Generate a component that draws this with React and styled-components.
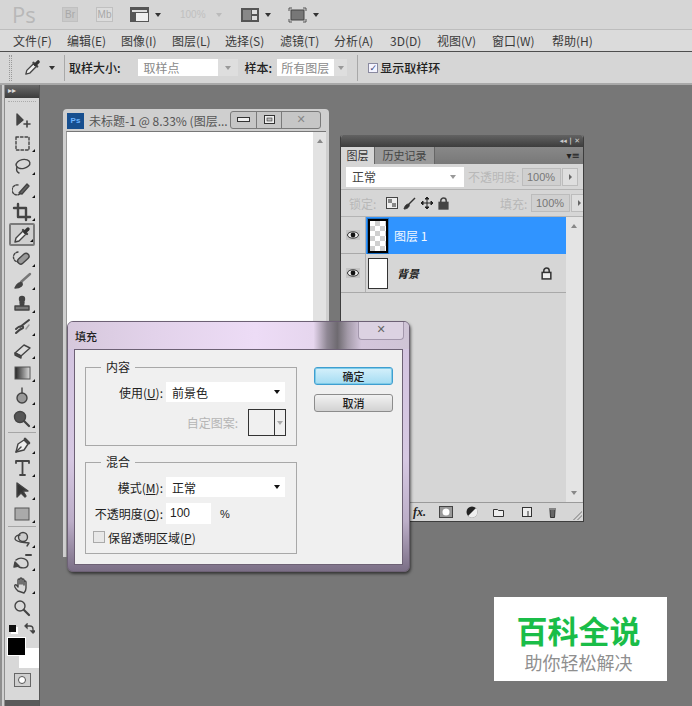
import React from "react";
import styled, { createGlobalStyle } from "styled-components";

const Global = createGlobalStyle`
  html, body { margin: 0; padding: 0; background: #777; }
  * { box-sizing: border-box; }
  body { font-family: "Noto Sans CJK SC", "Liberation Sans", sans-serif; font-size: 12px; color: #222; }
`;

const Frame = styled.div`
  width: 692px; height: 706px; overflow: hidden; display: flex; flex-direction: column; background: #777;
`;
const AppBar = styled.div`
  height: 30px; background: #d6d6d6; display: flex; align-items: center; padding-left: 12px; border-bottom: 1px solid #bdbdbd; flex: none;
`;
const PsLogo = styled.span`
  font: 22px/29px "Open Sans", "Liberation Sans", sans-serif; color: #b8b8b8; width: 50px; height: 29px; flex: none;
`;
const AppChip = styled.span`
  width: ${p => p.$w}px; height: 15px; margin-right: ${p => p.$mr}px; border: 1px solid #c0c0c0; background: ${p => p.$bg};
  color: #a8a8a8; font: 10px/13px "Liberation Sans", sans-serif; text-align: center; flex: none;
`;
const AppIconSlot = styled.span`
  display: flex; align-items: center; gap: 6px; margin-right: ${p => p.$mr}px; flex: none;
`;
const Zoomed = styled.span`
  color: #c0c0c0; font: 10px "Liberation Sans", sans-serif; width: 61px; display: flex; gap: 10px; align-items: center; flex: none;
`;
const Caret = styled.i`
  width: 0; height: 0; border-left: 3px solid transparent; border-right: 3px solid transparent;
  border-top: 4px solid ${p => p.$c || "#333"}; display: inline-block; flex: none; margin-left: ${p => p.$ml || 0}px;
`;
const MenuBar = styled.div`
  height: 22px; background: #dbdbdb; display: flex; gap: 16px; padding-left: 13px; align-items: center;
  border-bottom: 1px solid #4e4e4e; color: #3a3a3a; flex: none;
`;
const MenuItem = styled.span`line-height: 21px; white-space: nowrap; width: ${p => p.$w}px;`;
const OptionsBar = styled.div`
  height: 33px; background: #d6d6d6; display: flex; align-items: center; border-bottom: 2px solid #a9a9a9; flex: none;
`;
const Grip = styled.span`
  width: 3px; height: 26px; margin-left: 9px; margin-right: 11px; border-left: 1px dotted #999; border-right: 1px dotted #999; flex: none;
`;
const OptDivider = styled.span`width: 1px; height: 26px; background: #a8a8a8; flex: none; margin: 0 ${p => p.$r}px 0 ${p => p.$l}px;`;
const OptLabel = styled.span`font-weight: 500; color: #222; flex: none; margin-right: ${p => p.$mr}px; white-space: nowrap;`;
const OptSelect = styled.span`
  width: ${p => p.$w}px; height: 17px; background: #fff; color: #8a8a8a; line-height: 17px; padding-left: ${p => p.$pl}px; flex: none; white-space: nowrap; overflow: hidden;
`;
const OptArrow = styled.span`
  width: ${p => p.$w}px; height: 17px; background: #dedede; display: flex; justify-content: center; align-items: center;
  margin-right: ${p => p.$mr}px; flex: none;
`;
const OptCheck = styled.span`
  width: 10px; height: 10px; margin-right: 2px; border: 1px solid #8a8aa0; background: #f4f4ff; color: #3b4a80;
  font: bold 9px/9px "DejaVu Sans", sans-serif; text-align: center; flex: none;
`;
const Work = styled.div`flex: 1; display: flex; min-height: 0;`;
const LeftEdge = styled.div`width: 5px; background: #cfcfcf; border-left: 2px solid #8e8e8e; border-right: 1px solid #8e8e8e; flex: none;`;
const Tools = styled.div`
  width: 35px; flex: none; background: #d8d8d8; border-right: 1px solid #565656; display: flex; flex-direction: column; align-items: center;
`;
const ToolsHead = styled.div`
  align-self: stretch; height: 13px; background: linear-gradient(#6a6a6a, #3c3c3c); color: #ddd; font: 8px/12px "DejaVu Sans", sans-serif; padding-left: 3px; flex: none;
`;
const ToolsGrip = styled.div`align-self: stretch; height: 7px; margin: 3px 3px 0; border-top: 1px dotted #aaa; flex: none;`;
const ToolBtn = styled.div`
  width: 26px; height: ${p => p.$h || 23}px; position: relative; display: flex; align-items: center; justify-content: center; flex: none;
  ${p => p.$on && "border: 2px solid #7a7a7a; border-radius: 2px; background: #cfcfcf;"}
  ${p => p.$more && `&:after { content: ""; position: absolute; right: 0; bottom: 2px; border-left: 3px solid transparent; border-bottom: 3px solid #111; }`}
`;
const ToolSep = styled.div`width: 28px; height: 1px; background: #a6a6a6; flex: none; margin: ${p => p.$m || "1px 0"};`;
const MiniColors = styled.div`width: 30px; height: 18px; display: flex; justify-content: space-between; align-items: center; padding: 0 2px; flex: none;`;
const MiniSwatch = styled.span`width: 7px; height: 7px; background: #111; box-shadow: 2px 2px 0 #fff; flex: none;`;
const Colors = styled.div`width: 30px; height: 30px; position: relative; flex: none;`;
const Fg = styled.span`position: absolute; left: 0; top: 0; width: 19px; height: 19px; background: #000; border: 1px solid #fff; z-index: 1;`;
const Bg = styled.span`position: absolute; right: -2px; bottom: -1px; width: 20px; height: 20px; background: #fff;`;
const MaskBtn = styled.div`margin-top: 6px; width: 17px; height: 14px; background: #cfcfcf; border: 1px solid #666; display: flex; align-items: center; justify-content: center; flex: none;`;
const MaskHole = styled.span`width: 8px; height: 8px; border-radius: 50%; background: #fff; border: 1px solid #555;`;
const ToolsFoot = styled.div`margin-top: auto; align-self: stretch; height: 6px; background: #5a5a5a; flex: none;`;
const Desktop = styled.div`flex: 1; position: relative; background: #777;`;

const DocWindow = styled.div`
  position: absolute; left: 23px; top: 24px; width: 266px; height: 448px; background: #cfcfcf; border-radius: 4px 4px 0 0; padding: 0 3px;
  display: flex; flex-direction: column;
`;
const DocTitle = styled.div`height: 22px; display: flex; align-items: center; flex: none; padding-top: 1px;`;
const PsBadge = styled.span`
  width: 17px; height: 16px; margin-left: 1px; margin-right: 5px; background: #174f8f; color: #6db4ff; font: bold 8px/16px "Liberation Sans", sans-serif; text-align: center; flex: none;
`;
const DocName = styled.span`color: #555; width: 141px; white-space: nowrap; overflow: hidden; font-size: 12px; flex: none;`;
const WinBtns = styled.div`display: flex; height: 18px; border: 1px solid #7a7a7a; border-radius: 3px; margin-top: -2px; background: #c6c6c6; flex: none;`;
const WinBtn = styled.span`
  width: ${p => p.$w}px; display: flex; align-items: center; justify-content: center; border-left: ${p => p.$first ? "0" : "1px solid #7a7a7a"};
  color: #888; font: bold 11px/16px "DejaVu Sans", sans-serif;
`;
const DocBody = styled.div`flex: 1; display: flex; border-top: 1px solid #777; border-left: 1px solid #999;`;
const Paper = styled.div`flex: 1; background: #fff;`;
const DocScroll = styled.div`width: 13px; background: #e2e2e2; display: flex; justify-content: center; padding-top: 7px;`;
const UpArrow = styled.i`
  width: 0; height: 0; border-left: 3px solid transparent; border-right: 3px solid transparent; border-bottom: 4px solid #888; display: block;
`;
const DownArrow = styled.i`
  width: 0; height: 0; border-left: 3px solid transparent; border-right: 3px solid transparent; border-top: 4px solid #888; display: block;
`;

const Panel = styled.div`
  position: absolute; left: 300px; top: 50px; width: 244px; height: 387px; background: #d6d6d6; display: flex; flex-direction: column;
  border: 1px solid #3d3d3d; border-top: 0; border-radius: 3px 3px 0 0; overflow: hidden;
`;
const PanelHead = styled.div`
  height: 12px; background: linear-gradient(#626262, #3d3d3d); color: #ccc; font: bold 7px/12px "DejaVu Sans", sans-serif; text-align: right; padding-right: 3px; flex: none;
`;
const Tabs = styled.div`height: 17px; background: linear-gradient(#888, #787878); display: flex; align-items: stretch; flex: none; position: relative;`;
const Tab = styled.span`
  width: ${p => p.$w}px; text-align: center; line-height: 17px; font-size: 11px; color: ${p => p.$on ? "#333" : "#444"}; background: ${p => p.$on ? "#d6d6d6" : "#9a9a9a"};
  border-right: 1px solid #666;
`;
const TabMenu = styled.span`position: absolute; right: 3px; top: 3px; font: 10px/12px "DejaVu Sans", sans-serif; color: #222;`;
const PanelRow = styled.div`
  height: ${p => p.$h}px; display: flex; align-items: center; flex: none; padding-left: ${p => p.$pl || 0}px; border-bottom: ${p => p.$line ? "1px solid #b4b4b4" : "0"};
`;
const BlendSelect = styled.span`width: 118px; height: 20px; background: #fff; color: #444; line-height: 20px; padding-left: 6px; flex: none;`;
const BlendArrow = styled.span`width: 4px; flex: none; display: flex; justify-content: center; margin: 0 3px 0 -13px;`;
const DimLabel = styled.span`color: #b8b8b8; flex: none; white-space: nowrap; width: ${p => p.$w}px; margin: ${p => p.$m || 0};`;
const PctBox = styled.span`
  width: 39px; height: 18px; margin-left: 4px; background: #d0d0d0; border: 1px solid #bcbcbc; color: #777; font: 11px/16px "Liberation Sans", sans-serif; padding-left: 4px; flex: none;
`;
const PctBtn = styled.span`
  width: 16px; height: 18px; margin-left: 1px; background: #dedede; border: 1px solid #bcbcbc; display: flex; align-items: center; justify-content: center; flex: none;
`;
const RightTri = styled.i`width: 0; height: 0; border-top: 3px solid transparent; border-bottom: 3px solid transparent; border-left: 3px solid #666; display: block;`;
const LockIcons = styled.span`display: flex; gap: 5px; align-items: center; margin-left: 2px; flex: none; width: 100px;`;
const LayersArea = styled.div`flex: 1; display: flex; min-height: 0; border-top: 1px solid #b4b4b4;`;
const LayerList = styled.div`flex: 1; display: flex; flex-direction: column; min-width: 0;`;
const LayerRow = styled.div`
  height: ${p => p.$h}px; display: flex; align-items: stretch; flex: none; border-bottom: ${p => p.$on ? "0" : "1px solid #a9a9a9"};
`;
const EyeCol = styled.div`
  width: 25px; flex: none; display: flex; align-items: center; justify-content: center; border-right: 1px solid #b0b0b0; border-bottom: ${p => p.$on ? "1px solid #a9a9a9" : 0};
`;
const LayerMain = styled.div`
  flex: 1; display: flex; align-items: center; background: ${p => p.$on ? "#3094ff" : "transparent"}; position: relative;
`;
const Thumb = styled.div`
  width: 20px; height: ${p => p.$on ? 34 : 31}px; margin-left: 2px; flex: none;
  background: ${p => p.$checker ? "repeating-conic-gradient(#cfcfcf 0 25%, #fff 0 50%) 0 0 / 10px 10px" : "#fff"};
  border: ${p => p.$on ? "2px solid #000" : "1px solid #333"}; ${p => p.$on && "box-shadow: 0 0 0 1px #1c6fc2;"}
`;
const LayerName = styled.span`
  margin-left: ${p => p.$ml}px; color: ${p => p.$on ? "#f2f8ff" : "#222"}; font-style: ${p => p.$on ? "normal" : "italic"}; font-weight: ${p => p.$on ? 400 : 700}; white-space: nowrap; font-size: ${p => p.$on ? 12 : 11}px;
`;
const LockSlot = styled.span`margin-left: auto; margin-right: 14px; display: flex;`;
const PanelScroll = styled.div`width: 16px; background: #e4e4e4; display: flex; flex-direction: column; align-items: center; justify-content: space-between; padding: 7px 0 7px; flex: none; margin-right: 1px;`;
const PanelFoot = styled.div`
  height: 19px; border-top: 1px solid #9a9a9a; background: #d6d6d6; display: flex; align-items: center; flex: none; padding-left: 72px; position: relative;
`;
const Fx = styled.span`font: italic bold 12px/18px "Liberation Serif", serif; color: #222; width: 26px;`;
const FootIcon = styled.span`width: ${p => p.$w}px; display: flex; align-items: center; flex: none;`;
const ResizeGrip = styled.span`
  position: absolute; right: 1px; bottom: 1px; width: 11px; height: 11px;
  background: repeating-linear-gradient(135deg, #a5a5a5 0 1px, transparent 1px 3px);
  clip-path: polygon(100% 0, 100% 100%, 0 100%);
`;

const Dialog = styled.div`
  position: absolute; left: 27px; top: 236px; width: 343px; height: 251px; border-radius: 6px; padding: 0 6px 6px; overflow: hidden;
  background: linear-gradient(180deg, #d3c4e0 0, #d6c8e2 55%, #bcaec8 80%, #7b6f86 100%);
  border: 1px solid #6d6175; box-shadow: 1px 2px 3px rgba(0,0,0,.55);
  display: flex; flex-direction: column; z-index: 2;
`;
const DlgTitle = styled.div`
  height: 27px; flex: none; margin: 0 -6px; padding-left: 7px; display: flex; align-items: center; position: relative;
  font-weight: 500; font-size: 11px; color: #222;
  background: linear-gradient(90deg, #d6c8dc 0, #e2d2ea 25%, #eddcf6 55%, #e6d6ee 72%, #8f8794 76%, #6e6a70 79%, #a39aa8 82%, #d4c6dc 86%, #cfc4d6 100%);
`;
const DlgClose = styled.span`
  position: absolute; right: 5px; top: 0; width: 46px; height: 18px; border: 1px solid #a397ac; border-top: 0; border-radius: 0 0 4px 4px; background: #dcd2e2;
  color: #666; font: bold 11px/16px "DejaVu Sans", sans-serif; text-align: center;
`;
const DlgBody = styled.div`
  flex: 1; background: #f0f0f0; border: 1px solid #6d6175; padding: 9px 10px 10px 10px; display: flex; gap: 17px;
`;
const Groups = styled.div`width: 212px; display: flex; flex-direction: column; gap: 8px; flex: none;`;
const Group = styled.fieldset`
  margin: 0; padding: 0 7px; border: 1px solid #a8a8a8; height: ${p => p.$h}px; display: flex; flex-direction: column;
`;
const Legend = styled.legend`padding: 0 5px; margin-left: 8px; font-size: 12px; line-height: 16px; color: #222;`;
const Field = styled.div`
  display: flex; align-items: center; height: ${p => p.$h}px; margin-top: ${p => p.$mt || 0}px; flex: none;
`;
const FieldLabel = styled.label`
  width: ${p => p.$w}px; text-align: right; flex: none; white-space: nowrap; color: ${p => p.$dim ? "#b5b5b5" : "#222"}; font-size: 12px;
  u { text-decoration: underline; }
`;
const DlgSelect = styled.div`
  width: 119px; height: 20px; background: #fff; margin-left: 3px; display: flex; align-items: center; justify-content: space-between; padding: 0 5px 0 6px; flex: none; color: #222;
`;
const Pattern = styled.div`
  width: 38px; height: 27px; border: 1px solid #333; margin-left: 10px; display: flex; flex: none; background: #f0f0f0;
`;
const PatternSide = styled.span`margin-left: auto; width: 11px; border-left: 1px solid #333; display: flex; align-items: center; justify-content: center;`;
const NumBox = styled.div`
  width: 45px; height: 21px; margin-left: 3px; background: #fff; padding-left: 4px; font: 12px/20px "Liberation Sans", sans-serif; color: #222; flex: none;
`;
const Percent = styled.span`margin-left: 9px; font: 11px "Liberation Sans", sans-serif; color: #222;`;
const Check = styled.span`width: 12px; height: 12px; border: 1px solid #aaa; background: #e8e8e8; flex: none; margin-right: 3px;`;
const Buttons = styled.div`display: flex; flex-direction: column; gap: 9px; padding-top: 8px; flex: none;`;
const DlgBtn = styled.button`
  width: 79px; height: 18px; padding: 0; font: 500 11px/14px "Noto Sans CJK SC", sans-serif; color: #222; border-radius: 3px;
  border: 1px solid ${p => p.$primary ? "#3f9ed0" : "#8c8c8c"};
  background: ${p => p.$primary ? "linear-gradient(#d5f0fb, #a4dcf2)" : "linear-gradient(#f2f2f2, #d2d2d2)"};
  box-shadow: ${p => p.$primary ? "0 0 0 1px #7ecbe8 inset" : "none"};
`;
const Watermark = styled.div`
  position: absolute; left: 454px; top: 512px; width: 173px; height: 84px; background: #fff; display: flex; flex-direction: column; align-items: center; padding: 14px 4px 0 0;
`;
const WmTitle = styled.div`font-size: 31px; line-height: 38px; font-weight: 700; color: #1abd48; flex: none;`;
const WmSub = styled.div`font-size: 18px; line-height: 22px; color: #8f8f8f; margin-top: 2px; flex: none;`;

const I = ({ children, w = 20, h = 20, vb = "0 0 20 20" }) => (
  <svg width={w} height={h} viewBox={vb} fill="none" stroke="#444" strokeWidth="1.4" strokeLinecap="round" strokeLinejoin="round">{children}</svg>
);
const Dropper = ({ s = 20 }) => (
  <I w={s} h={s}>
    <path d="M3 17l1-4 7-7 3 3-7 7z" fill="#eee" />
    <path d="M11 5l4 4" strokeWidth="2.4" />
    <path d="M13 7l3-3" stroke="#333" strokeWidth="3.4" />
  </I>
);
const toolIcons = {
  move: <I><path d="M5 4v11l6-5z" fill="#444" /><path d="M15 11v6M12 14h6" strokeWidth="1.600" /></I>,
  marquee: <I><rect x="4" y="4" width="13" height="13" strokeDasharray="2.5 2" /></I>,
  lasso: <I><ellipse cx="11" cy="8" rx="7" ry="4.5" transform="rotate(-12 11 8)" /><path d="M5 11c-1 3 0 5 2 6" /></I>,
  quick: <I><path d="M6 6a5 5 0 1 0 2 9" strokeDasharray="2 1.5" /><path d="M7 14l8-9 2 2-7 8z" fill="#666" /></I>,
  crop: <I><path d="M6 2v13h12M2 6h12v12" strokeWidth="2.400" /></I>,
  heal: <I><path d="M6 4a5 5 0 1 0 1 10" strokeDasharray="2 1.5" /><rect x="5" y="8" width="13" height="6" rx="3" transform="rotate(-42 11 11)" fill="#999" /></I>,
  brush: <I><path d="M18 3L9 11" strokeWidth="2.4" stroke="#777" /><path d="M3 17c2-5 5-6 7-5 1 2-1 5-7 5z" fill="#444" /></I>,
  stamp: <I><path d="M8 8h4l-.5 4h-3z" fill="#444" /><circle cx="10" cy="5" r="2.5" fill="#444" /><rect x="3" y="12" width="14" height="4" fill="#777" /></I>,
  history: <I><path d="M17 3L8 10M4 12c4-4 8-4 7-1-3 1-4 2-7 5" strokeWidth="2" /><path d="M14 12l3-4" stroke="#999" /></I>,
  eraser: <I><path d="M3 13l9-8 6 3-9 8z" fill="#ddd" /><path d="M3 13l6 3v2l-6-3z" fill="#555" /></I>,
  gradient: <svg width="20" height="20" viewBox="0 0 20 20"><defs><linearGradient id="g1"><stop offset="0" stopColor="#222" /><stop offset="1" stopColor="#ddd" /></linearGradient></defs><rect x="3" y="4" width="15" height="12" fill="url(#g1)" stroke="#555" /></svg>,
  dodge: <I><circle cx="10" cy="12" r="5" fill="#999" /><path d="M10 7V2" /></I>,
  burn: <I><circle cx="8" cy="8" r="5.5" fill="#555" /><path d="M12 12l5 5" strokeWidth="2.2" /></I>,
  pen: <I><path d="M4 17l2-8 6-4 4 4-4 6z" fill="#eee" /><path d="M4 17l5-5" /><path d="M13 4l4 4" strokeWidth="2.6" /></I>,
  text: <I><path d="M4 5V3h13v2M10.500 3v14M8 17h5" strokeWidth="1.8" /></I>,
  path: <I><path d="M5 2v14l4-4 4 4 1-1-3-5h5z" fill="#333" /></I>,
  shape: <svg width="20" height="20" viewBox="0 0 20 20"><rect x="3" y="4" width="14" height="12" fill="#aaa" stroke="#555" /></svg>,
  orbit: <I><circle cx="11" cy="8" r="4.5" fill="#ccc" /><path d="M3 10c0-3 3-4 5-4M3 10c2 4 8 3 14 4l-2 3" /></I>,
  roll: <I><path d="M14 3h5" strokeWidth="2" /><path d="M4 8c5-4 12-1 12 4 0 5-8 5-11 1" /><path d="M3 10l4 4-5 1z" fill="#444" /></I>,
  hand: <I><path d="M6 16c-2-2-4-5-3-6s2 1 3 2V5c0-1.500 2-1.500 2 0v4-5c0-1.500 2-1.500 2 0v5-4c0-1.500 2-1.500 2 0v5-3c0-1.500 2-1.500 2 0v6c0 3-1 4-2 5z" /></I>,
  zoom: <I><circle cx="8" cy="8" r="5" /><path d="M12 12l5 5" strokeWidth="2.2" /></I>,
};
const toolsTop = [["move", 0], ["marquee", 1], ["lasso", 1], ["quick", 1], ["crop", 1], ["dropper", 1, 1], ["heal", 1], ["brush", 1], ["stamp", 1], ["history", 1], ["eraser", 1], ["gradient", 1], ["dodge", 1], ["burn", 1]];
const toolsMid = [["pen", 1], ["text", 1], ["path", 1], ["shape", 1]];
const toolsEnd = [["orbit", 1], ["roll", 1], ["hand", 1], ["zoom", 0]];
const renderTool = ([n, more, on]) => (
  <ToolBtn key={n} $more={more} $on={on}>{n === "dropper" ? <Dropper /> : toolIcons[n]}</ToolBtn>
);
const menus = [["文件(F)", 38], ["编辑(E)", 38], ["图像(I)", 35], ["图层(L)", 37], ["选择(S)", 39], ["滤镜(T)", 38], ["分析(A)", 40], ["3D(D)", 31], ["视图(V)", 39], ["窗口(W)", 44], ["帮助(H)", 40]];

const Eye = () => (
  <svg width="14" height="10" viewBox="0 0 14 10"><rect width="14" height="10" fill="#c4c4c4" /><ellipse cx="7" cy="5" rx="5.500" ry="3.200" fill="#eee" stroke="#333" /><circle cx="7" cy="5" r="2.400" fill="#111" /></svg>
);
const Padlock = ({ c = "#333" }) => (
  <svg width="11" height="13" viewBox="0 0 10 12" fill="none" stroke={c} strokeWidth="1.400"><path d="M2.500 5V3.500a2.500 2.500 0 0 1 5 0V5" /><rect x="1" y="5" width="8" height="6" fill={c === "#333" ? "#eee" : c} /></svg>
);

export default function App() {
  return (
    <Frame>
      <Global />
      <AppBar>
        <PsLogo>Ps</PsLogo>
        <AppChip $w={16} $mr={18} $bg="#c9c9c9">Br</AppChip>
        <AppChip $w={17} $mr={17} $bg="#dcdcdc">Mb</AppChip>
        <AppIconSlot $mr={19}>
          <svg width="19" height="15" viewBox="0 0 19 15"><rect width="19" height="15" fill="#555" /><rect x="2" y="3" width="15" height="2" fill="#ddd" /><rect x="6" y="6" width="12" height="8" fill="#eee" /></svg>
          <Caret />
        </AppIconSlot>
        <Zoomed>100%<Caret $c="#bbb" /></Zoomed>
        <AppIconSlot $mr={17}>
          <svg width="18" height="14" viewBox="0 0 18 14"><rect width="18" height="14" fill="#555" /><rect x="2" y="2" width="8" height="10" fill="#888" /><rect x="11" y="2" width="5" height="4" fill="#ddd" /><rect x="11" y="8" width="5" height="4" fill="#ddd" /></svg>
          <Caret />
        </AppIconSlot>
        <AppIconSlot $mr={0}>
          <svg width="19" height="16" viewBox="0 0 19 16"><rect x="3" y="3" width="13" height="10" fill="#777" stroke="#444" /><path d="M1 4V1h3M15 1h3v3M18 12v3h-3M4 15H1v-3" stroke="#555" fill="none" /></svg>
          <Caret />
        </AppIconSlot>
      </AppBar>
      <MenuBar>{menus.map(([m, w]) => <MenuItem key={m} $w={w}>{m}</MenuItem>)}</MenuBar>
      <OptionsBar>
        <Grip />
        <Dropper s={19} />
        <Caret $ml={7} />
        <OptDivider $l={9} $r={4} />
        <OptLabel $mr={17}>取样大小:</OptLabel>
        <OptSelect $w={80} $pl={6}>取样点</OptSelect>
        <OptArrow $w={20} $mr={7}><Caret $c="#999" /></OptArrow>
        <OptLabel $mr={5}>样本:</OptLabel>
        <OptSelect $w={57} $pl={4}>所有图层</OptSelect>
        <OptArrow $w={13} $mr={10}><Caret $c="#999" /></OptArrow>
        <OptDivider $l={0} $r={10} />
        <OptCheck>✓</OptCheck>
        <OptLabel $mr={0}>显示取样环</OptLabel>
      </OptionsBar>
      <Work>
        <LeftEdge />
        <Tools>
          <ToolsHead>▸▸</ToolsHead>
          <ToolsGrip />
          {toolsTop.map(renderTool)}
          <ToolSep $m="2px 0 0" />
          {toolsMid.map(renderTool)}
          <ToolSep $m="1px 0 0" />
          {toolsEnd.map(renderTool)}
          <MiniColors>
            <MiniSwatch />
            <svg width="11" height="11" viewBox="0 0 11 11" fill="none" stroke="#444" strokeWidth="1.300"><path d="M2 3h4c2 0 3 1 3 3v3M1 3l2-2v4zM9 10L7 8h4z" /></svg>
          </MiniColors>
          <Colors><Fg /><Bg /></Colors>
          <MaskBtn><MaskHole /></MaskBtn>
          <ToolsFoot />
        </Tools>
        <Desktop>
          <DocWindow>
            <DocTitle>
              <PsBadge>Ps</PsBadge>
              <DocName>未标题-1 @ 8.33% (图层...</DocName>
              <WinBtns>
                <WinBtn $w={25} $first><svg width="13" height="5" viewBox="0 0 13 5"><rect x=".5" y=".5" width="12" height="4" fill="#eee" stroke="#333" /></svg></WinBtn>
                <WinBtn $w={25}><svg width="11" height="9" viewBox="0 0 11 9"><rect x=".5" y=".5" width="10" height="8" fill="#eee" stroke="#333" /><rect x="3" y="3" width="5" height="3" fill="#bbb" stroke="#333" strokeWidth=".6" /></svg></WinBtn>
                <WinBtn $w={39}>✕</WinBtn>
              </WinBtns>
            </DocTitle>
            <DocBody>
              <Paper />
              <DocScroll><UpArrow /></DocScroll>
            </DocBody>
          </DocWindow>

          <Panel>
            <PanelHead>◂◂ | ✕</PanelHead>
            <Tabs>
              <Tab $w={34} $on>图层</Tab>
              <Tab $w={60}>历史记录</Tab>
              <TabMenu>▾≡</TabMenu>
            </Tabs>
            <PanelRow $h={26} $pl={5} $line>
              <BlendSelect>正常</BlendSelect>
              <BlendArrow><Caret $c="#999" /></BlendArrow>
              <DimLabel $w={50} $m="0 0 0 10px">不透明度:</DimLabel>
              <PctBox>100%</PctBox>
              <PctBtn><RightTri /></PctBtn>
            </PanelRow>
            <PanelRow $h={26} $pl={8}>
              <DimLabel $w={35}>锁定:</DimLabel>
              <LockIcons>
                <svg width="12" height="12" viewBox="0 0 12 12"><rect x=".5" y=".5" width="11" height="11" fill="#eee" stroke="#444" /><path d="M2 2h4v4H2zM6 6h4v4H6z" fill="#888" /></svg>
                <svg width="13" height="13" viewBox="0 0 13 13" fill="none" stroke="#333"><path d="M12 1L6 7" strokeWidth="1.500" /><path d="M1 12c1-4 3-5 5-5 1 2-1 5-5 5z" fill="#333" /></svg>
                <svg width="12" height="12" viewBox="0 0 12 12" fill="none" stroke="#222"><path d="M6 0v12M0 6h12" /><path d="M6 0L4 2h4zM6 12l-2-2h4zM0 6l2-2v4zM12 6l-2-2v4z" fill="#222" /></svg>
                <Padlock c="#444" />
              </LockIcons>
              <DimLabel $w={27} $m="0 0 0 14px">填充:</DimLabel>
              <PctBox>100%</PctBox>
              <PctBtn><RightTri /></PctBtn>
            </PanelRow>
            <LayersArea>
              <LayerList>
                <LayerRow $h={37} $on>
                  <EyeCol $on><Eye /></EyeCol>
                  <LayerMain $on>
                    <Thumb $checker $on />
                    <LayerName $on $ml={6}>图层 1</LayerName>
                  </LayerMain>
                </LayerRow>
                <LayerRow $h={39}>
                  <EyeCol><Eye /></EyeCol>
                  <LayerMain>
                    <Thumb />
                    <LayerName $ml={9}>背景</LayerName>
                    <LockSlot><Padlock /></LockSlot>
                  </LayerMain>
                </LayerRow>
              </LayerList>
              <PanelScroll><UpArrow /><DownArrow /></PanelScroll>
            </LayersArea>
            <PanelFoot>
              <Fx>fx.</Fx>
              <FootIcon $w={27}><svg width="14" height="12" viewBox="0 0 14 12"><rect x=".5" y=".5" width="13" height="11" fill="#999" stroke="#444" /><circle cx="7" cy="6" r="3.500" fill="#fff" /></svg></FootIcon>
              <FootIcon $w={27}><svg width="12" height="12" viewBox="0 0 12 12"><circle cx="6" cy="6" r="5.500" fill="#222" /><path d="M10 2L2 10a5.500 5.500 0 0 0 8-8z" fill="#eee" /></svg></FootIcon>
              <FootIcon $w={29}><svg width="11" height="9" viewBox="0 0 11 9"><path d="M.5 8.500v-7h4l1 1h5v6z" fill="#eee" stroke="#333" /></svg></FootIcon>
              <FootIcon $w={26}><svg width="10" height="10" viewBox="0 0 10 10"><rect x=".5" y=".5" width="9" height="9" fill="#eee" stroke="#333" /><path d="M6 4v5" stroke="#333" /></svg></FootIcon>
              <FootIcon $w={14}><svg width="9" height="11" viewBox="0 0 9 11"><path d="M1 2h7M2 3l.5 7.500h4L7 3" fill="#666" stroke="#333" /></svg></FootIcon>
              <ResizeGrip />
            </PanelFoot>
          </Panel>

          <Dialog>
            <DlgTitle>填充<DlgClose>✕</DlgClose></DlgTitle>
            <DlgBody>
              <Groups>
                <Group $h={87}>
                  <Legend>内容</Legend>
                  <Field $h={20} $mt={7}>
                    <FieldLabel $w={70}>使用(<u>U</u>):</FieldLabel>
                    <DlgSelect>前景色<Caret $c="#111" /></DlgSelect>
                  </Field>
                  <Field $h={27} $mt={7}>
                    <FieldLabel $w={145} $dim>自定图案:</FieldLabel>
                    <Pattern><PatternSide><Caret $c="#aaa" /></PatternSide></Pattern>
                  </Field>
                </Group>
                <Group $h={100}>
                  <Legend>混合</Legend>
                  <Field $h={20} $mt={7}>
                    <FieldLabel $w={70}>模式(<u>M</u>):</FieldLabel>
                    <DlgSelect>正常<Caret $c="#111" /></DlgSelect>
                  </Field>
                  <Field $h={21} $mt={6}>
                    <FieldLabel $w={70}>不透明度(<u>O</u>):</FieldLabel>
                    <NumBox>100</NumBox>
                    <Percent>%</Percent>
                  </Field>
                  <Field $h={16} $mt={5}>
                    <Check />
                    <span>保留透明区域(<u>P</u>)</span>
                  </Field>
                </Group>
              </Groups>
              <Buttons>
                <DlgBtn $primary>确定</DlgBtn>
                <DlgBtn>取消</DlgBtn>
              </Buttons>
            </DlgBody>
          </Dialog>

          <Watermark>
            <WmTitle>百科全说</WmTitle>
            <WmSub>助你轻松解决</WmSub>
          </Watermark>
        </Desktop>
      </Work>
    </Frame>
  );
}
